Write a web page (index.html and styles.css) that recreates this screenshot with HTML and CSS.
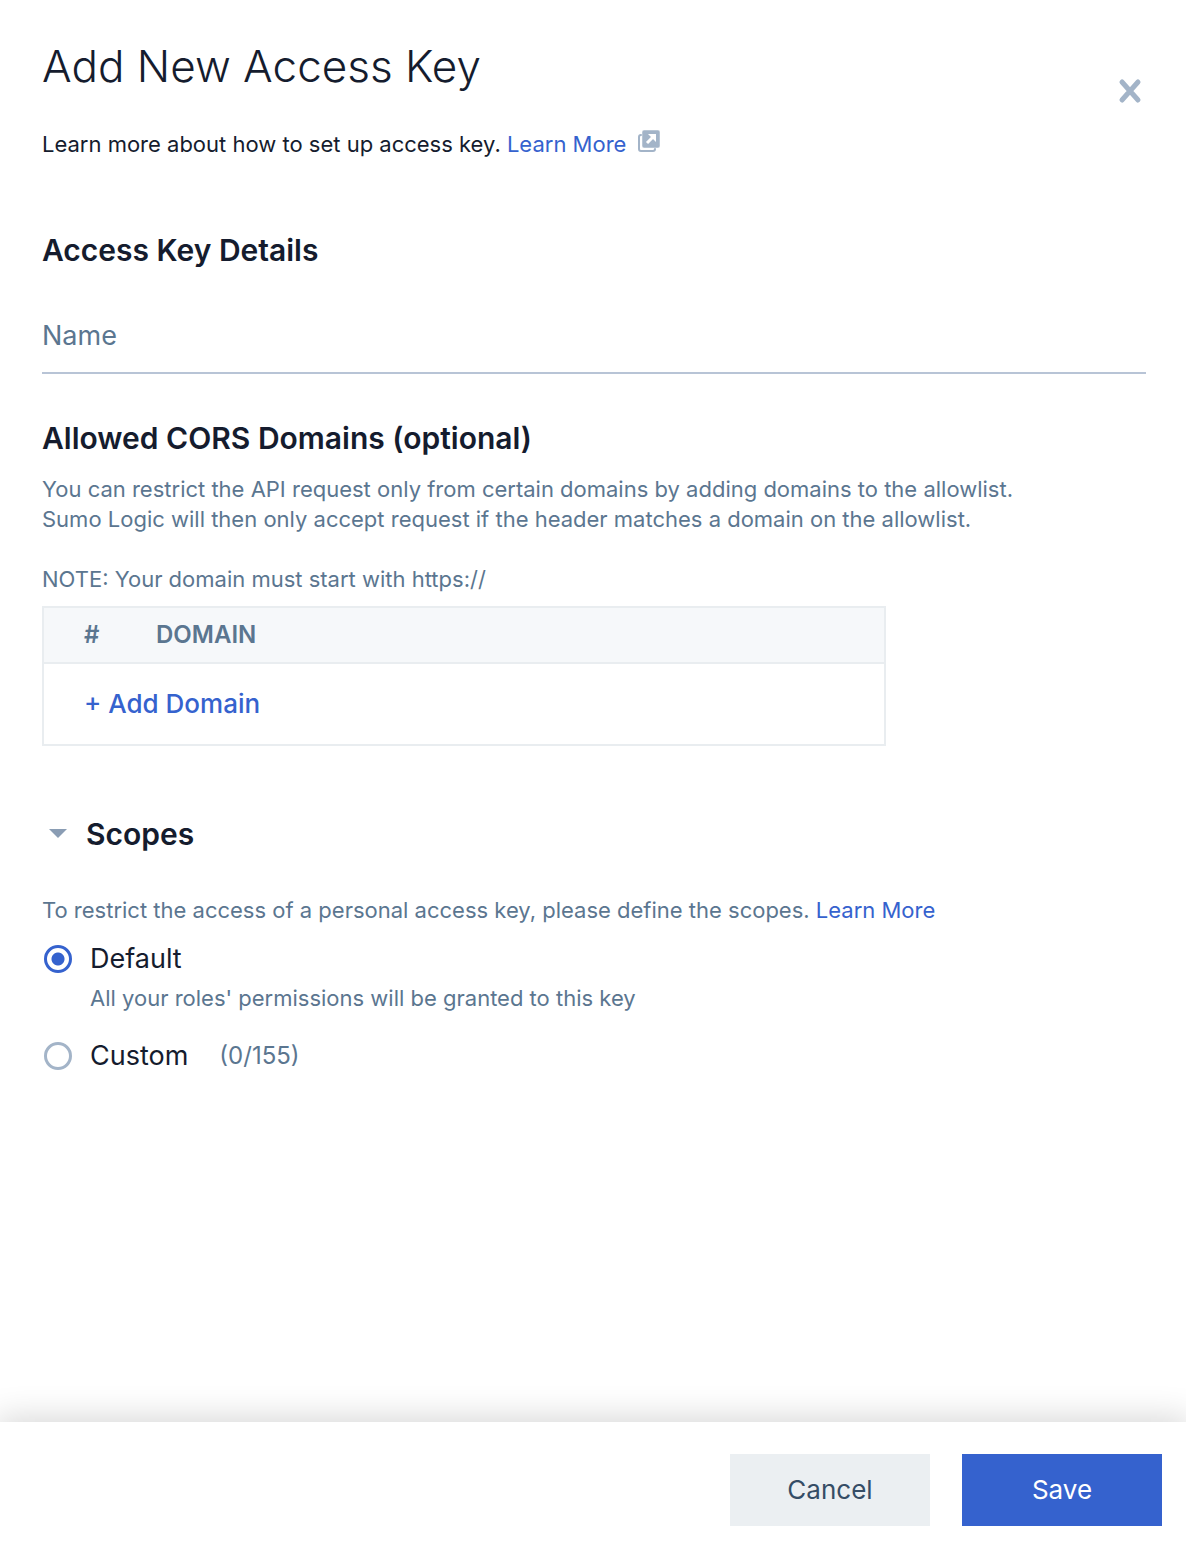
FILE: index.html
```html
<!DOCTYPE html>
<html lang="en">
<head>
<meta charset="utf-8">
<meta name="viewport" content="width=device-width, initial-scale=1">
<title>Add New Access Key</title>
<link rel="stylesheet" href="styles.css">
</head>
<body>
<form class="panel">
  <header class="header">
    <h1 class="title">Add New Access Key</h1>
    <button class="close" type="button" aria-label="Close">
      <svg width="24" height="26" viewBox="0 0 24 26"><path d="M4 4L20 22M20 4L4 22" stroke="#a3b4c8" stroke-width="5" stroke-linecap="round"/></svg>
    </button>
  </header>
  <main class="content">
    <div class="intro">
      <p>Learn more about how to set up access key. <a class="link" href="#">Learn More</a></p>
      <svg width="22" height="24" viewBox="0 0 22 24"><rect x="1" y="6" width="16" height="16" rx="2" fill="none" stroke="#a3b4c8" stroke-width="2"/><rect x="4" y="1" width="18" height="18" rx="2" fill="#a3b4c8" stroke="#fff" stroke-width="0.5"/><path d="M9 14L15 8" stroke="#fff" stroke-width="3"/><path d="M10 5h8v8z" fill="#fff"/></svg>
    </div>
    <h2 class="heading details">Access Key Details</h2>
    <input class="name" type="text" placeholder="Name" aria-label="Name">
    <h2 class="heading cors">Allowed CORS Domains (optional)</h2>
    <p class="text">You can restrict the API request only from certain domains by adding domains to the allowlist.<br>Sumo Logic will then only accept request if the header matches a domain on the allowlist.</p>
    <p class="text note">NOTE: Your domain must start with https://</p>
    <table class="domains">
      <thead><tr><th class="number" scope="col">#</th><th scope="col">DOMAIN</th></tr></thead>
      <tbody><tr><td colspan="2"><button class="add" type="button">+ Add Domain</button></td></tr></tbody>
    </table>
    <h2 class="heading scopes"><button class="toggle" type="button" aria-expanded="true"><svg width="18" height="10" viewBox="0 0 18 10"><path d="M0 0h18L9 9z" fill="#8a9db4"/></svg>Scopes</button></h2>
    <p class="text restrict">To restrict the access of a personal access key, please define the scopes. <a class="link" href="#">Learn More</a></p>
    <div class="option"><input class="radio" type="radio" name="scope" id="default" checked><label for="default">Default</label></div>
    <p class="text hint">All your roles' permissions will be granted to this key</p>
    <div class="option"><input class="radio" type="radio" name="scope" id="custom"><label for="custom">Custom</label><span class="text count">(0/155)</span></div>
  </main>
  <footer class="footer">
    <button class="button cancel" type="button">Cancel</button>
    <button class="button save" type="submit">Save</button>
  </footer>
</form>
</body>
</html>
```

FILE: styles.css
```css
* { box-sizing: border-box; }
body { margin: 0; background: #fff; color: #151c2e; font-family: Inter, "Liberation Sans", sans-serif; font-size: 22px; line-height: 30px; }
button, input { font: inherit; }
h1, h2, p { margin: 0; }
svg { flex: none; }
button { border: 0; padding: 0; background: none; cursor: pointer; }
.panel { min-height: 100vh; display: flex; flex-direction: column; overflow: hidden; }
.header { display: flex; justify-content: space-between; align-items: flex-start; padding: 36px 44px 0 42px; }
.title { font-size: 44px; line-height: 60px; font-weight: 300; }
.close { display: flex; margin-top: 42px; }
.content { flex: 1; padding: 25px 40px 40px 42px; }
.intro { display: flex; gap: 12px; }
.link { color: #3562ce; text-decoration: none; }
.heading { font-size: 30px; line-height: 40px; font-weight: 600; }
.details { margin-top: 71px; }
.name { display: block; width: 100%; height: 60px; margin-top: 44px; padding: 0 0 16px; border: 0; border-bottom: 2px solid #b8c4d6; font-size: 27px; color: #151c2e; background: none; }
.name::placeholder { color: #5b7690; opacity: 1; }
.cors { margin: 44px 0 16px; }
.text { color: #5b7690; }
.note { margin-top: 30px; }
.domains { width: 844px; max-width: 100%; margin-top: 12px; border: 2px solid #e9edf0; border-collapse: collapse; }
.domains th { height: 56px; padding: 0; background: #f6f8fa; color: #5b7690; font-size: 24px; font-weight: 600; text-align: left; }
.domains .number { width: 113px; padding-left: 40px; }
.domains td { height: 82px; padding: 0 40px; border-top: 2px solid #e9edf0; }
.add { color: #3562ce; font-size: 26px; font-weight: 500; }
.scopes { margin-top: 68px; padding-left: 7px; }
.toggle { display: flex; align-items: center; gap: 19px; color: inherit; }
.restrict { margin: 41px 0 14px; }
.option { display: flex; align-items: center; height: 40px; font-size: 27px; }
.radio { appearance: none; width: 28px; height: 28px; margin: 0 18px 0 2px; border: 3px solid #a3b4c8; border-radius: 50%; }
.radio:checked { border-color: #3562ce; background: radial-gradient(circle, #3562ce 6px, transparent 7px); }
.hint { margin: 4px 0 23px 48px; }
.count { margin-left: 31px; font-size: 24px; }
.footer { display: flex; justify-content: flex-end; gap: 32px; padding: 32px 24px 28px; background: #fff; box-shadow: 0 0 32px 4px rgba(0, 0, 0, .16); }
.button { width: 200px; height: 72px; font-size: 26px; }
.cancel { background: #ebeff2; color: #354d66; }
.save { background: #3562ce; color: #fff; }
```
